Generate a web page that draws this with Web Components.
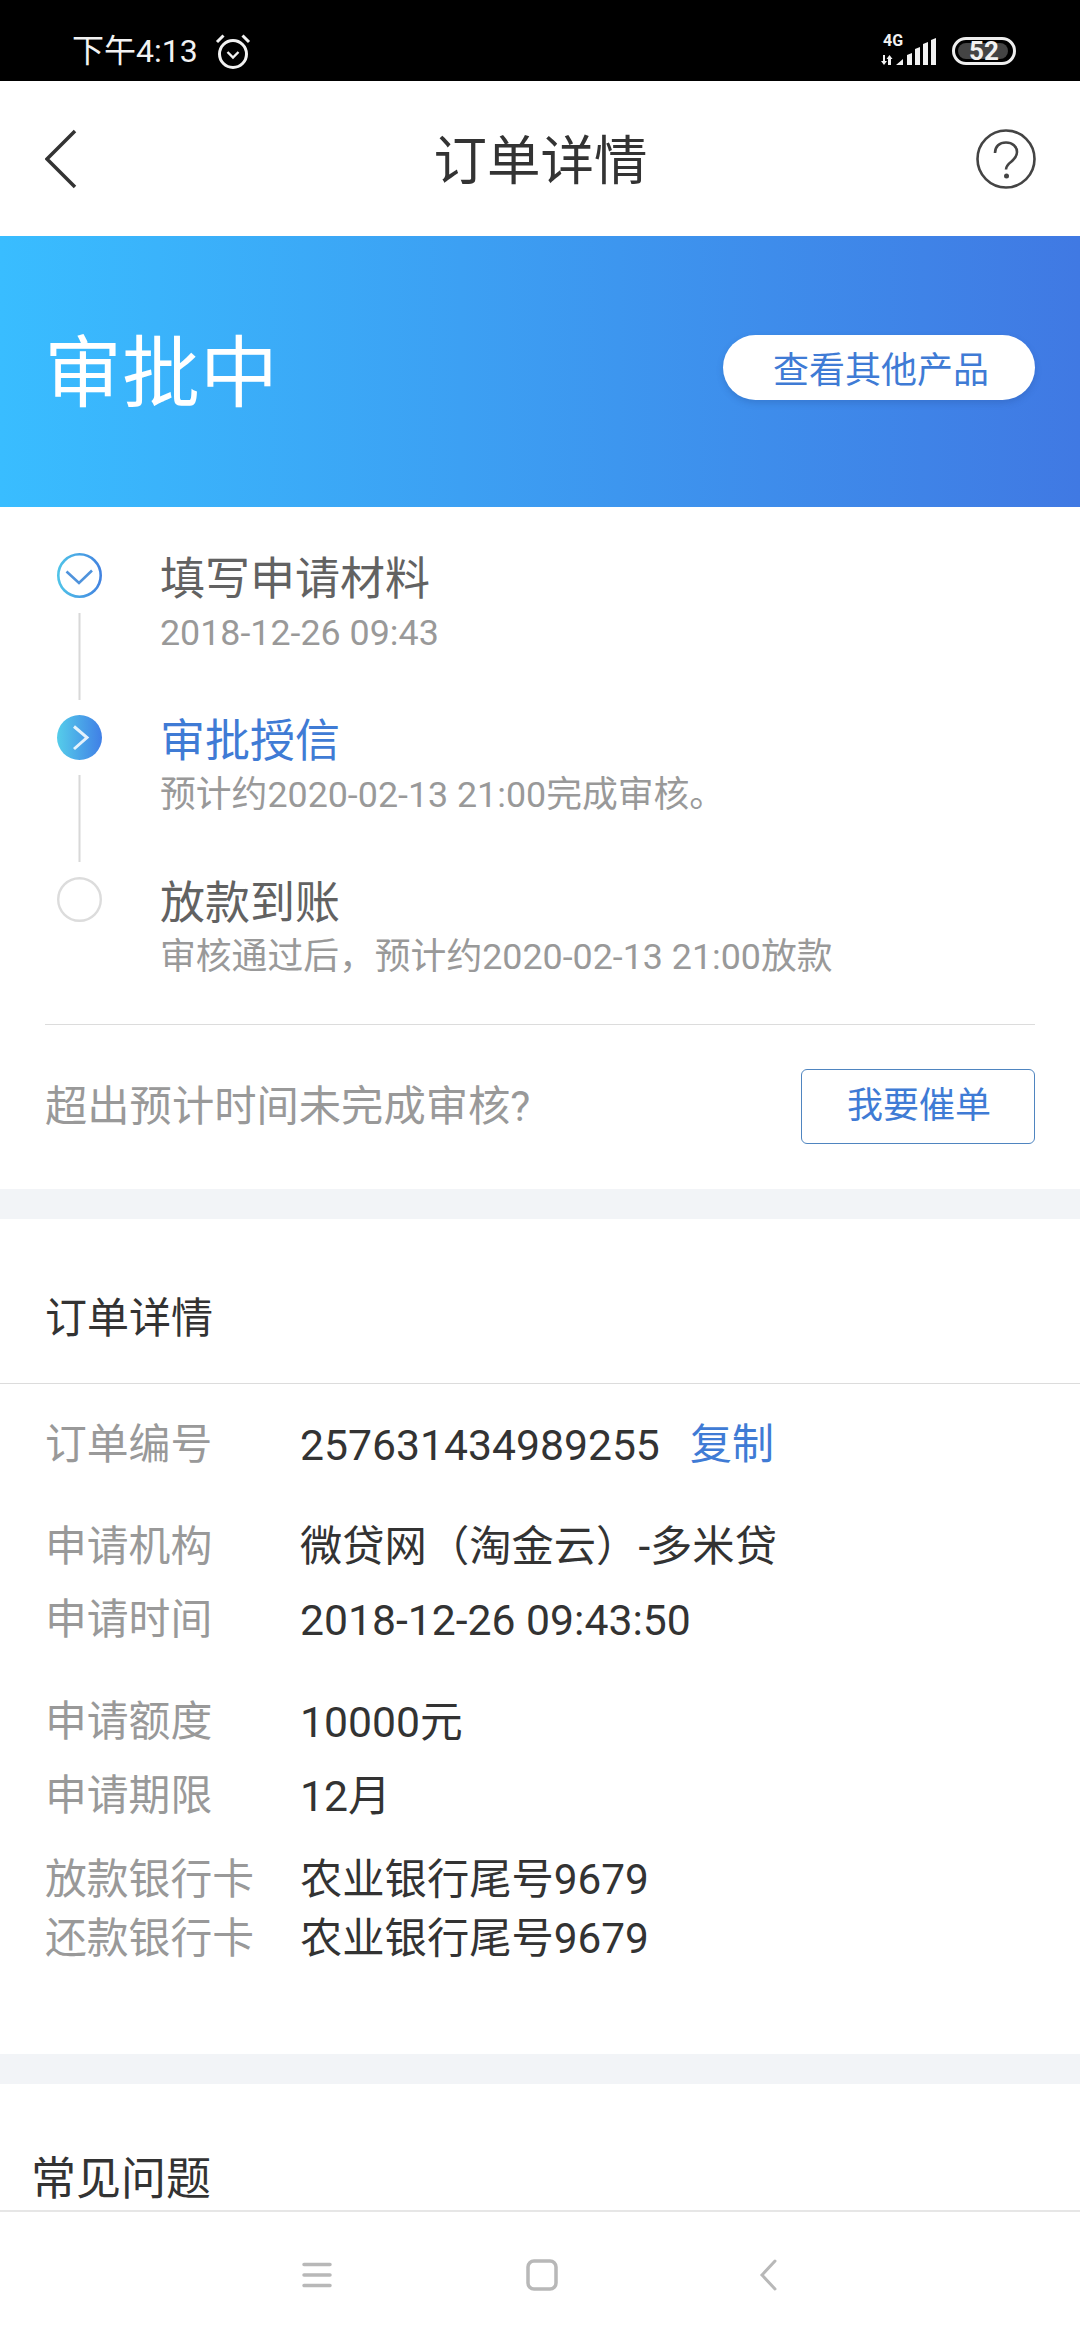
<!DOCTYPE html>
<html lang="zh">
<head>
<meta charset="UTF-8">
<title>订单详情</title>
<style>
  html, body { margin: 0; padding: 0; background: #fff; }
  body { font-family: Roboto, "Noto Sans CJK SC", sans-serif; }
  order-page { height: 2340px; }
</style>
</head>
<body>
<order-page>
  <status-bar slot="top"></status-bar>
  <nav-header slot="top" title-text="订单详情"></nav-header>
  <status-banner slot="top" status="审批中" action="查看其他产品"></status-banner>

  <section-card>
    <step-item state="done" heading="填写申请材料" note="2018-12-26 09:43"></step-item>
    <step-item state="active" heading="审批授信" note="预计约2020-02-13 21:00完成审核。"></step-item>
    <step-item state="todo" last heading="放款到账" note="审核通过后，预计约2020-02-13 21:00放款"></step-item>
    <urge-row text="超出预计时间未完成审核?" action="我要催单"></urge-row>
  </section-card>

  <detail-list heading="订单详情">
    <detail-row label="订单编号" at="36" value="257631434989255" link="复制"></detail-row>
    <detail-row label="申请机构" at="52" size="42.3" value="微贷网（淘金云）-多米贷"></detail-row>
    <detail-row label="申请时间" at="23" value="2018-12-26 09:43:50"></detail-row>
    <detail-row label="申请额度" at="52" value="10000元"></detail-row>
    <detail-row label="申请期限" at="24" value="12月"></detail-row>
    <detail-row label="放款银行卡" at="34" size="42.3" value="农业银行尾号9679"></detail-row>
    <detail-row label="还款银行卡" at="9" size="42.3" value="农业银行尾号9679"></detail-row>
  </detail-list>

  <faq-section heading="常见问题"></faq-section>

  <system-nav slot="bottom"></system-nav>
</order-page>

<script>
  const define = (name, html) => {
    customElements.define(name, class extends HTMLElement {
      connectedCallback() {
        if (this.shadowRoot) return
        const root = this.attachShadow({ mode: "open" })
        const attr = key => this.getAttribute(key) || ""
        root.innerHTML = html(attr, this)
      }
    })
  }

  define("order-page", () => `
    <style>
      :host { display: flex; flex-direction: column; width: 1080px; overflow: hidden; background: #fff; }
      main { flex: 1; min-height: 0; overflow: hidden; }
    </style>
    <slot name="top"></slot>
    <main><slot></slot></main>
    <slot name="bottom"></slot>
  `)

  define("status-bar", () => `
    <style>
      :host { display: flex; align-items: center; height: 81px; background: #000; color: #f2f2f2; padding: 0 64px 0 72px; box-sizing: border-box; flex: none; }
      .time { font-size: 32px; line-height: 36px; margin-top: 20px; }
      .alarm { margin: 20px 0 0 17px; }
      .right { margin-left: auto; margin-top: 20px; display: flex; align-items: center; }
      .net { position: relative; width: 58px; height: 32px; }
      .net svg { display: block; }
      .g { position: absolute; left: 4px; top: -3px; font: 700 16px/17px Roboto, sans-serif; }
      .bat { position: relative; margin-left: 15px; width: 64px; height: 28px; box-sizing: border-box; border: 3px solid #eee; border-radius: 14px; display: flex; align-items: center; justify-content: center; font: 700 26px/22px Roboto, sans-serif; color: #f2f2f2; }
      .bat i { position: absolute; left: 3px; top: 3px; bottom: 3px; width: 50px; background: #444; border-radius: 9px; }
      .bat span { position: relative; }
    </style>
    <span class="time">下午4:13</span>
    <svg class="alarm" width="36" height="36" viewBox="0 0 36 36" fill="none" stroke="#f2f2f2" stroke-width="3">
      <circle cx="18" cy="21" r="13.5"/>
      <path d="M12.5 19l5.500 5.500 5.500-5.500" stroke-width="2.4"/>
      <path d="M2 9l6.500-6.500M34 9l-6.500-6.500"/>
    </svg>
    <div class="right">
      <div class="net">
        <span class="g">4G</span>
        <svg width="58" height="32" viewBox="0 0 58 32" fill="#f2f2f2">
          <path d="M4 20h2v6h2l-3 4-3-4h2zM9 30v-6H7.500L10.500 20l3 4H12v6z"/>
          <path d="M17 30l7-6v6zM28 30V20l5-2v12zM36 30V14l5-2v18zM44 30V9l5-2v23zM52 30V5l5-2v27z"/>
        </svg>
      </div>
      <div class="bat"><i></i><span>52</span></div>
    </div>
  `)

  define("nav-header", attr => `
    <style>
      :host { display: grid; grid-template-columns: 1fr auto 1fr; align-items: center; height: 155px; padding: 0 44px 0 45px; box-sizing: border-box; background: #fff; flex: none; }
      h1 { margin: 6px 0 0; font-size: 53.5px; font-weight: 400; line-height: 60px; color: #333; }
      svg:last-child { justify-self: end; }
    </style>
    <svg width="32" height="60" viewBox="0 0 32 60" fill="none" stroke="#333" stroke-width="3.5">
      <path d="M30 2L2 30l28 28"/>
    </svg>
    <h1>${attr("title-text")}</h1>
    <svg width="60" height="60" viewBox="0 0 60 60" fill="none" stroke="#444" stroke-width="2.6">
      <circle cx="30" cy="30" r="28.5"/>
      <path d="M19 24c0-6.500 4.500-10.500 11-10.500s11 4 11 9.500c0 5-3 7-5.500 9.500-3 2.300-5.500 4.500-5.500 8"/>
      <circle cx="30.500" cy="47" r="2.500" fill="#444" stroke="none"/>
    </svg>
  `)

  define("status-banner", attr => `
    <style>
      :host { display: flex; align-items: center; justify-content: space-between; height: 271px; padding: 0 45px 0 44px; box-sizing: border-box; background: linear-gradient(90deg, #39bdff, #4079e3); flex: none; }
      h2 { margin: 6px 0 0; font-size: 78px; font-weight: 400; line-height: 90px; color: #fff; }
      div { width: 312px; height: 65px; margin-bottom: 8px; padding-left: 4px; box-sizing: border-box; border-radius: 33px; background: #fff; color: #3f7bd5; font-size: 36px; line-height: 73px; text-align: center; box-shadow: 0 3px 6px rgba(30,70,140,.25); }
    </style>
    <h2>${attr("status")}</h2>
    <div>${attr("action")}</div>
  `)

  define("section-card", () => `
    <style>
      :host { display: block; height: 712px; padding: 46px 45px 0; box-sizing: border-box; background: #fff; border-bottom: 30px solid #f2f4f7; }
    </style>
    <slot></slot>
  `)

  const stepIcons = {
    done: `<svg width="45" height="45" viewBox="0 0 45 45" fill="none">
      <defs><linearGradient id="a" x1="0" x2="1" y1="0" y2="0"><stop offset="0" stop-color="#4fc3e8"/><stop offset="1" stop-color="#4283e0"/></linearGradient></defs>
      <circle cx="22.5" cy="22.5" r="21.2" stroke="url(#a)" stroke-width="2.6"/>
      <path d="M9.500 18.500L22 30l13-12.500" stroke="#4f93dc" stroke-width="2.6"/></svg>`,
    active: `<svg width="45" height="45" viewBox="0 0 45 45" fill="none">
      <defs><linearGradient id="b" x1="0" x2="1" y1="0" y2="0"><stop offset="0" stop-color="#55cdea"/><stop offset="1" stop-color="#407fe6"/></linearGradient></defs>
      <circle cx="22.5" cy="22.5" r="22.5" fill="url(#b)"/>
      <path d="M17 11.500l13 11-13 11.500" stroke="#fff" stroke-opacity=".85" stroke-width="3"/></svg>`,
    todo: `<svg width="45" height="45" viewBox="0 0 45 45" fill="none">
      <circle cx="22.5" cy="22.5" r="21.3" stroke="#dcdcdc" stroke-width="2.4"/></svg>`
  }

  define("step-item", (attr, el) => `
    <style>
      :host { display: flex; height: ${el.hasAttribute("last") ? 147 : 162}px; padding-left: 12px; }
      .rail { width: 45px; flex: none; display: flex; flex-direction: column; align-items: center; }
      .rail svg { display: block; flex: none; }
      .rail i { width: 2px; height: 87px; margin-top: 15px; background: #d8d8d8; transform: translateX(-.5px); }
      .body { margin-left: 58px; padding-top: 3px; }
      h3 { margin: 0; font-size: 45px; font-weight: 400; line-height: 48px; color: ${attr("state") === "active" ? "#3f7bd5" : "#626262"}; }
      p { margin: 9px 0 0; font-size: 35.8px; line-height: 40px; color: #999; white-space: nowrap; }
    </style>
    <div class="rail">${stepIcons[attr("state")]}${el.hasAttribute("last") ? "" : "<i></i>"}</div>
    <div class="body"><h3>${attr("heading")}</h3><p>${attr("note")}</p></div>
  `)

  define("urge-row", attr => `
    <style>
      :host { display: flex; align-items: center; justify-content: space-between; height: 75px; padding-top: 44px; border-top: 1px solid #dcdcdc; }
      span { font-size: 42.3px; line-height: 48px; color: #999; }
      div { width: 234px; height: 75px; padding-left: 2px; box-sizing: border-box; border: 1.5px solid #4f85c0; border-radius: 6px; color: #3f7bd5; font-size: 36px; line-height: 72px; text-align: center; }
    </style>
    <span>${attr("text")}</span>
    <div>${attr("action")}</div>
  `)

  define("detail-list", attr => `
    <style>
      :host { display: block; background: #fff; border-bottom: 30px solid #f2f4f7; height: 835px; }
      h3 { margin: 0; height: 165px; box-sizing: border-box; padding: 75px 45px 0; font-size: 42px; font-weight: 400; line-height: 50px; color: #333; border-bottom: 1px solid #dcdcdc; }
    </style>
    <h3>${attr("heading")}</h3>
    <slot></slot>
  `)

  define("detail-row", attr => `
    <style>
      :host { display: flex; align-items: center; height: 50px; margin-top: ${attr("at")}px; padding-left: 45px; font-size: ${attr("size") || 42.7}px; line-height: 50px; white-space: nowrap; }
      .k { width: 255px; flex: none; color: #999; font-size: 41.8px; }
      .v { color: #333; }
      .l { color: #3f7bd5; margin-left: 30px; font-size: 42px; }
    </style>
    <span class="k">${attr("label")}</span>
    <span class="v">${attr("value")}</span>
    ${attr("link") ? `<span class="l">${attr("link")}</span>` : ""}
  `)

  define("faq-section", attr => `
    <style>
      :host { display: block; background: #fff; padding: 68px 31px 0; font-size: 45px; line-height: 56px; color: #333; }
    </style>
    ${attr("heading")}
  `)

  define("system-nav", () => `
    <style>
      :host { display: flex; height: 130px; padding-bottom: 2px; border-top: 2px solid #e6e6e6; box-sizing: border-box; background: #fff; flex: none; align-items: center; }
      svg { display: block; }
      .row { display: grid; grid-template-columns: 302px 224px 233px 1fr; width: 100%; align-items: center; }
    </style>
    <div class="row">
      <span></span>
      <svg width="30" height="26" viewBox="0 0 30 26" stroke="#b8b8b8" stroke-width="3.5" stroke-linecap="round">
        <path d="M2 2.500h26M2 13h26M2 23.500h26"/>
      </svg>
      <svg width="32" height="32" viewBox="0 0 32 32" fill="none" stroke="#b8b8b8" stroke-width="3.5">
        <rect x="2" y="2" width="28" height="28" rx="6"/>
      </svg>
      <svg width="20" height="32" viewBox="0 0 20 32" fill="none" stroke="#b8b8b8" stroke-width="3" stroke-linecap="round">
        <path d="M16 2L3 16l13 14"/>
      </svg>
    </div>
  `)
</script>
</body>
</html>
